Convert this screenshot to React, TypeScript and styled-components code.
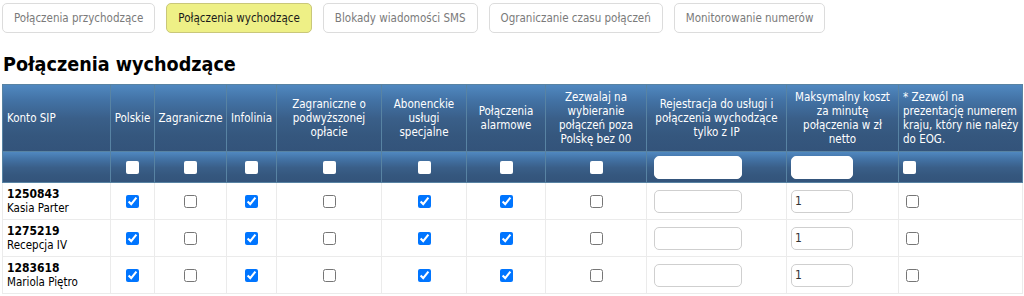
import React from "react";
import styled, { createGlobalStyle, css } from "styled-components";

const GlobalStyle = createGlobalStyle`
  body {
    margin: 0;
    background: #fff;
    font-family: "DejaVu Sans Condensed", Tahoma, "DejaVu Sans", sans-serif;
    color: #000;
  }
`;

const Page = styled.div`
  padding: 3px 2px 0 2px;
  width: 1020px;
`;

const TabBar = styled.div`
  display: flex;
  gap: 11px;
`;

const TabButton = styled.button<{ $active?: boolean }>`
  height: 30px;
  padding: 0 11px;
  border: 1px solid #dcdcdc;
  border-radius: 5px;
  background: #fff;
  color: #7a7a7a;
  font-family: inherit;
  font-size: 11.5px;
  cursor: pointer;

  ${({ $active }) =>
    $active &&
    css`
      background: #eef086;
      border-color: #c9c77a;
      color: #1a1a1a;
    `}
`;

const Title = styled.h2`
  margin: 20px 0 7px 1px;
  font-size: 19.6px;
  font-weight: bold;
  line-height: 24px;
`;

const Table = styled.table`
  width: 1020px;
  table-layout: fixed;
  border-collapse: collapse;
  font-size: 11.5px;
`;

const HeadRow = styled.tr<{ $h: number }>`
  height: ${({ $h }) => $h}px;
  background: linear-gradient(
    to bottom,
    #5088c0 0%,
    #4373a6 22%,
    #3a5f89 50%,
    #35577e 75%,
    #33537a 100%
  );
`;

const HeadCell = styled.th<{ $align?: "left" | "center" }>`
  border: 1px solid #5883a3;
  padding: 2px ${({ $align }) => ($align === "left" ? "1px 2px 4px" : "3px")};
  color: #fff;
  font-weight: normal;
  line-height: 14px;
  text-align: ${({ $align }) => $align ?? "center"};
  vertical-align: middle;
`;

const HeadCheck = styled.input.attrs({ type: "checkbox" })`
  appearance: none;
  width: 13px;
  height: 13px;
  margin: 4px 0 0 0;
  background: #fff;
  border-radius: 2px;
  border: none;
`;

const Row = styled.tr`
  height: 37px;
`;

const Cell = styled.td<{ $align?: "left" | "center" }>`
  border: 1px solid #ebebeb;
  padding: 2px 4px;
  text-align: ${({ $align }) => $align ?? "center"};
  vertical-align: middle;
`;

const AccountNo = styled.div`
  font-weight: bold;
  font-size: 12px;
  line-height: 14px;
`;

const AccountName = styled.div`
  font-size: 11.5px;
  line-height: 15px;
`;

const Check = styled.input.attrs({ type: "checkbox" })<{ $ml?: number }>`
  width: 13px;
  height: 13px;
  margin: 3px 0 0 ${({ $ml }) => $ml ?? 0}px;
`;

const TextField = styled.input<{ $w: number; $ml: number; $dark?: boolean }>`
  box-sizing: border-box;
  width: ${({ $w }) => $w}px;
  height: 23px;
  border: 1px solid ${({ $dark }) => ($dark ? "#fff" : "#cfcfcf")};
  border-radius: 5px;
  padding: 0 3px;
  font-family: inherit;
  font-size: 12px;
  color: #333;
  background: #fff;
  display: block;
  margin: 0 auto 0 ${({ $ml }) => $ml}px;
`;

const widths = [108, 44, 72, 50, 105, 85, 79, 101, 140, 112, 124];

const headers: { label: string; align?: "left" | "center" }[] = [
  { label: "Konto SIP", align: "left" },
  { label: "Polskie" },
  { label: "Zagraniczne" },
  { label: "Infolinia" },
  { label: "Zagraniczne o podwyższonej opłacie" },
  { label: "Abonenckie usługi specjalne" },
  { label: "Połączenia alarmowe" },
  { label: "Zezwalaj na wybieranie połączeń poza Polskę bez 00" },
  { label: "Rejestracja do usługi i połączenia wychodzące tylko z IP" },
  { label: "Maksymalny koszt za minutę połączenia w zł netto" },
  { label: "* Zezwól na prezentację numerem kraju, który nie należy do EOG.", align: "left" },
];

const accounts = [
  { no: "1250843", name: "Kasia Parter" },
  { no: "1275219", name: "Recepcja IV" },
  { no: "1283618", name: "Mariola Piętro" },
];

// polskie, zagraniczne, infolinia, podwyzszona, abonenckie, alarmowe, bez00
const flags = [true, false, true, false, true, true, false];

const tabs = [
  "Połączenia przychodzące",
  "Połączenia wychodzące",
  "Blokady wiadomości SMS",
  "Ograniczanie czasu połączeń",
  "Monitorowanie numerów",
];

export default function App() {
  return (
    <Page>
      <GlobalStyle />
      <TabBar>
        {tabs.map((t) => (
          <TabButton key={t} $active={t === "Połączenia wychodzące"}>
            {t}
          </TabButton>
        ))}
      </TabBar>
      <Title>Połączenia wychodzące</Title>
      <Table>
        <colgroup>
          {widths.map((w, i) => (
            <col key={i} style={{ width: w }} />
          ))}
        </colgroup>
        <thead>
          <HeadRow $h={67}>
            {headers.map((h) => (
              <HeadCell key={h.label} $align={h.align}>
                {h.label}
              </HeadCell>
            ))}
          </HeadRow>
          <HeadRow $h={31}>
            <HeadCell />
            {flags.map((_, i) => (
              <HeadCell key={i}>
                <HeadCheck />
              </HeadCell>
            ))}
            <HeadCell>
              <TextField $w={88} $ml={4} $dark />
            </HeadCell>
            <HeadCell>
              <TextField $w={62} $ml={1} $dark />
            </HeadCell>
            <HeadCell $align="left">
              <HeadCheck />
            </HeadCell>
          </HeadRow>
        </thead>
        <tbody>
          {accounts.map((a) => (
            <Row key={a.no}>
              <Cell $align="left">
                <AccountNo>{a.no}</AccountNo>
                <AccountName>{a.name}</AccountName>
              </Cell>
              {flags.map((f, i) => (
                <Cell key={i}>
                  <Check defaultChecked={f} />
                </Cell>
              ))}
              <Cell>
                <TextField $w={88} $ml={3} />
              </Cell>
              <Cell>
                <TextField $w={62} $ml={0} defaultValue="1" />
              </Cell>
              <Cell $align="left">
                <Check $ml={3} />
              </Cell>
            </Row>
          ))}
        </tbody>
      </Table>
    </Page>
  );
}
